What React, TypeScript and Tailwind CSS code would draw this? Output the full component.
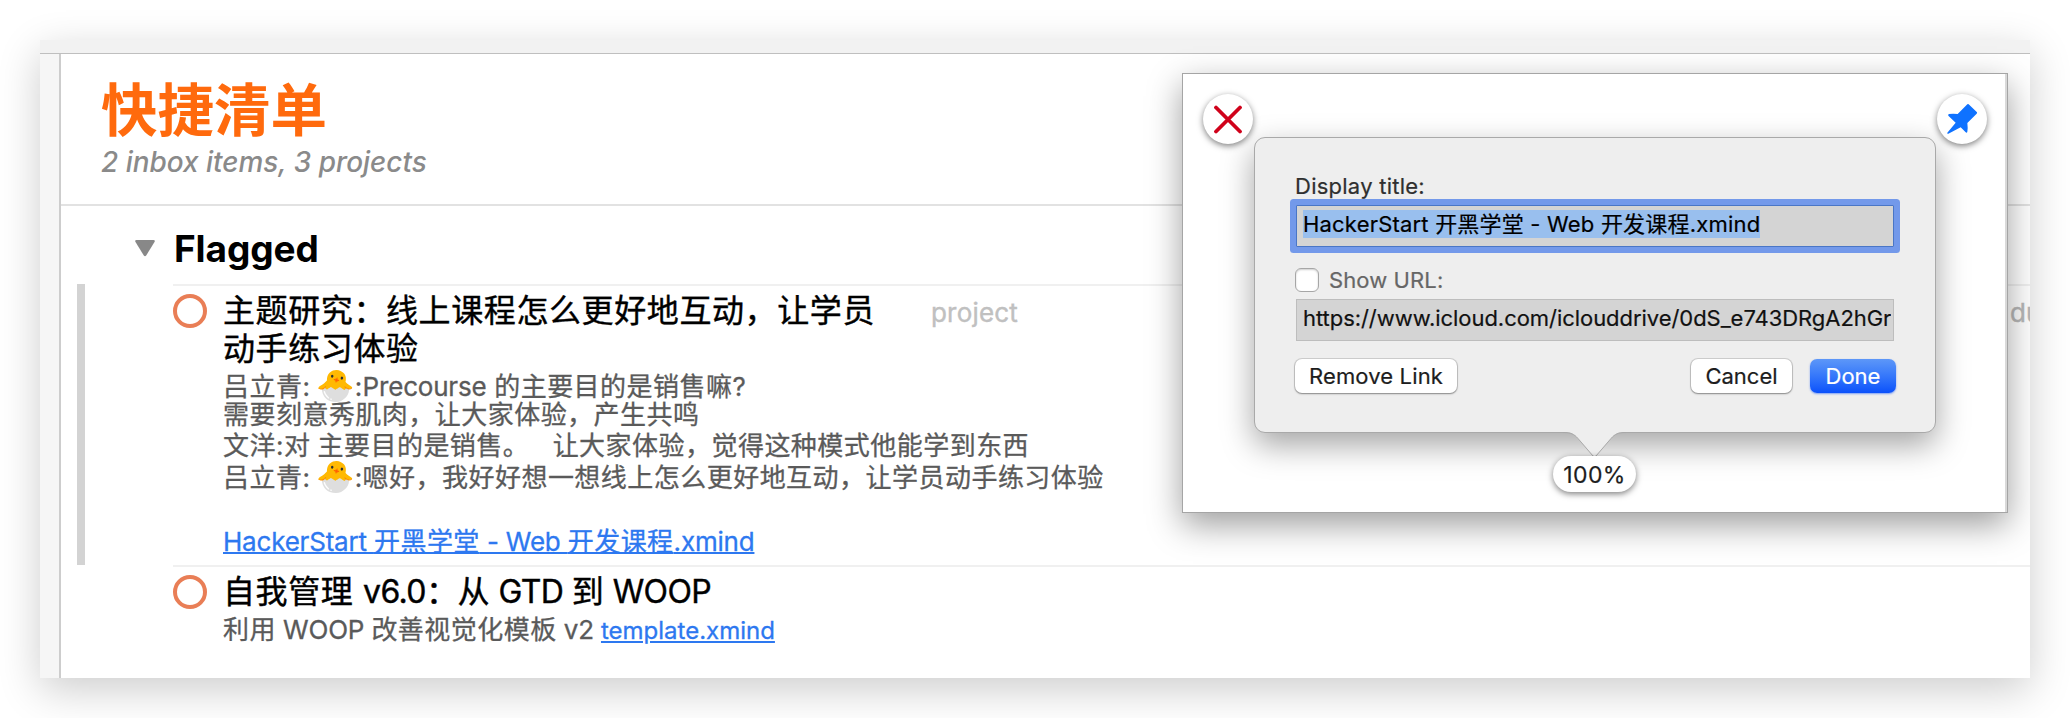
import type { ReactNode } from 'react';

function Latin({ children }: { children: ReactNode }) {
  return <span className="tracking-[-0.2px]">{children}</span>;
}

function TitleLatin({ children }: { children: ReactNode }) {
  return <span className="tracking-[-0.6px]">{children}</span>;
}

function Chick() {
  return <span className="-mr-px -ml-[2px] text-[31px] leading-[20px] [-webkit-text-stroke:0]">🐣</span>;
}

function StatusCircle() {
  return <span className="mt-2 size-[34px] shrink-0 rounded-full border-4 border-[#e97e56] bg-white" />;
}

function Task({ title, aside, children }: { title: ReactNode; aside?: ReactNode; children: ReactNode }) {
  return (
    <div className="flex border-t-2 border-[#f0f0f0]">
      <StatusCircle />
      <div className="ml-4 min-w-0 flex-1 pt-[6px]">
        <div className="flex">
          <h3 className="w-[664px] shrink-0 text-[32px] leading-[38px] tracking-[0.6px] text-black [-webkit-text-stroke:0.4px]">
            {title}
          </h3>
          {aside}
        </div>
        <div className="text-[26px] leading-[28px] tracking-[0.47px] whitespace-pre text-[#5a5a5a] [-webkit-text-stroke:0.3px]">
          {children}
        </div>
      </div>
    </div>
  );
}

function RoundButton({ className, children }: { className: string; children: ReactNode }) {
  return (
    <button
      className={`absolute top-5 flex size-[50px] items-center justify-center rounded-full bg-white shadow-[0_2px_6px_rgba(0,0,0,0.5)] ${className}`}
    >
      {children}
    </button>
  );
}

function LinkPopover() {
  return (
    <div className="absolute top-[63px] left-[71px] flex h-[296px] w-[682px] flex-col rounded-[11px] border border-[#a9a9a9] bg-[#eeeeee] pt-[34px] pr-[41px] pl-[41px] text-[22px] text-[#1d1d1d] shadow-[0_12px_32px_rgba(0,0,0,0.36)] [-webkit-text-stroke:0.2px]">
      <label className="-ml-px leading-[28px] tracking-[0.25px] text-[#2f2f2f]">Display title:</label>
      <div className="mt-[5px] h-[42px] rounded-[1px] border border-[#4a76c6] bg-[#d4d4d4] pt-1 pl-[6px] shadow-[0_0_0_6px_#7399ea]">
        <span className="inline-block bg-[#99bfee] align-top leading-[28px] tracking-[0.2px] whitespace-pre text-black">
          HackerStart 开黑学堂 - Web 开发课程.xmind
        </span>
      </div>
      <div className="mt-[21px] -ml-px flex h-6 items-center">
        <span className="size-6 rounded-[6px] border border-[#a6a6a6] bg-white shadow-[inset_0_1px_2px_rgba(0,0,0,0.2)]" />
        <span className="ml-[10px] leading-[22px] tracking-[0.1px] text-[#666666]">Show URL:</span>
      </div>
      <div className="mt-[7px] h-[42px] border border-[#bdbdbd] bg-[#d4d4d4] pt-1 pr-[2px] pl-[6px]">
        <div className="overflow-hidden leading-[28px] tracking-[-0.05px] whitespace-nowrap text-[#111111]">
          https://www.icloud.com/iclouddrive/0dS_e743DRgA2hGr
        </div>
      </div>
      <div className="mt-[18px] -mr-[2px] -ml-[1px] flex h-[34px] gap-[18px] leading-[34px]">
        <button className="mr-auto w-[162px] rounded-[7px] bg-white tracking-[0.15px] shadow-[0_0_0_1px_rgba(0,0,0,0.13),0_1px_2px_rgba(0,0,0,0.35)]">
          Remove Link
        </button>
        <button className="w-[101px] rounded-[7px] bg-white shadow-[0_0_0_1px_rgba(0,0,0,0.13),0_1px_2px_rgba(0,0,0,0.35)]">
          Cancel
        </button>
        <button className="w-[86px] rounded-[7px] bg-linear-to-b from-[#5d97f8] to-[#0a50fb] text-white shadow-[0_1px_2px_rgba(10,80,251,0.5)]">
          Done
        </button>
      </div>
      <svg className="absolute top-[294px] left-[308px]" width="63" height="26" viewBox="0 0 63 26">
        <path d="M0 0C8 0 11 2 15 6.5L30 24Q31.5 25.5 33 24L48 6.5C52 2 55 0 63 0Z" fill="#eeeeee" />
        <path d="M0 0.5C8 0.5 11 2 15 6.5L30 24Q31.5 25.5 33 24L48 6.5C52 2 55 0.5 63 0.5" fill="none" stroke="#a9a9a9" />
      </svg>
    </div>
  );
}

function PreviewPanel() {
  return (
    <div className="absolute top-[33px] left-[1142px] h-[440px] w-[826px] border border-[#a5a5a5] bg-white shadow-[0_12px_32px_rgba(0,0,0,0.38)]">
      <div className="ml-auto h-full w-[2px] bg-[#d9d9d9]" />
      <LinkPopover />
      <RoundButton className="left-5">
        <svg width="30" height="30" viewBox="0 0 30 30" fill="none" stroke="#d0021b" strokeWidth="3.8" strokeLinecap="round">
          <path d="M3 3.5L27 27.5M27 3.5L3 27.5" />
        </svg>
      </RoundButton>
      <RoundButton className="left-[754px]">
        <svg width="50" height="50" viewBox="0 0 150 150" fill="#0f72ff">
          <path d="M91 31Q93 29 95 31L120 55Q121 57 119 59L91 87Q93 102 91 113Q90 118 86 115L71 100L34 119L31 119L31 116L56 86L34 65Q32 62 36 60Q48 58 62 60Z" />
        </svg>
      </RoundButton>
      <div className="absolute top-[382px] left-[370px] flex h-9 w-[83px] items-center justify-center rounded-full bg-white pt-[3px] text-[23px] tracking-[0.4px] text-[#1d1d1d] shadow-[0_2px_6px_rgba(0,0,0,0.5)] [-webkit-text-stroke:0.2px]">
        100%
      </div>
    </div>
  );
}

export default function App() {
  return (
    <div
      lang="zh-CN"
      className="h-[718px] w-[2070px] overflow-hidden bg-white p-10 font-['Inter','Noto_Sans_CJK_SC',sans-serif]"
    >
      <div className="relative flex h-[638px] flex-col bg-white shadow-[0_12px_40px_rgba(0,0,0,0.2)]">
        <div className="h-[14px] shrink-0 border-b border-[#bfbfbf] bg-[#f2f2f2]" />
        <div className="flex min-h-0 flex-1">
          <div className="w-[21px] shrink-0 border-r-2 border-[#cdcdcd] bg-[#f6f6f6]" />
          <main className="min-w-0 flex-1">
            <header className="h-[152px] border-b-2 border-[#e2e2e2] pt-[27px] pl-10">
              <h1 className="text-[56.5px] leading-[60px] font-bold text-[#ff6a0d]">快捷清单</h1>
              <p className="mt-1 text-[27.9px] leading-[34px] font-medium text-[#8a8a8a] italic">2 inbox items, 3 projects</p>
            </header>
            <div className="flex h-[78px] items-start pt-[7px] pl-[74px]">
              <svg className="mt-[27px]" width="20" height="17" viewBox="0 0 20 17" fill="#888888">
                <path d="M1.5 0H18.5Q20.5 0 19.5 2L11.2 15.5Q10 17 8.8 15.5L0.5 2Q-0.5 0 1.5 0Z" />
              </svg>
              <h2 className="ml-[19px] text-[37px] leading-[71px] font-bold tracking-[-0.1px] text-black">Flagged</h2>
            </div>
            <div className="flex">
              <div className="ml-4 h-[281px] w-2 shrink-0 bg-[#d3d3d3]" />
              <div className="ml-[88px] min-w-0 flex-1">
                <div className="h-[281px]">
                  <Task
                    title="主题研究：线上课程怎么更好地互动，让学员动手练习体验"
                    aside={
                      <>
                        <span className="mt-[2px] ml-11 flex-1 text-[26px] leading-[38px] tracking-[0.2px] text-[#c0c0c0] [-webkit-text-stroke:0.4px]">
                          project
                        </span>
                        <span className="mt-[2px] w-5 overflow-hidden text-[26px] leading-[38px] text-[#b8b8b8] [-webkit-text-stroke:0.4px]">
                          du
                        </span>
                      </>
                    }
                  >
                    <p className="mt-[5px]">
                      吕立青: <Chick />:<Latin>Precourse</Latin> 的主要目的是销售嘛?
                    </p>
                    <p>需要刻意秀肌肉，让大家体验，产生共鸣</p>
                    <p className="mt-[3px]">
                      文洋:对<Latin> </Latin>主要目的是销售。{'\u00a0\u00a0\u00a0'}让大家体验，觉得这种模式他能学到东西
                    </p>
                    <p className="mt-1">
                      吕立青: <Chick />:嗯好，我好好想一想线上怎么更好地互动，让学员动手练习体验
                    </p>
                    <p className="mt-9">
                      <a className="text-[#2d78f0] underline decoration-2 underline-offset-1 [text-decoration-skip-ink:none]">
                        <Latin>HackerStart </Latin>开黑学堂<Latin> - Web </Latin>开发课程<Latin>.xmind</Latin>
                      </a>
                    </p>
                  </Task>
                </div>
                <Task
                  title={
                    <>
                      自我管理 <TitleLatin>v6.0：</TitleLatin>从<TitleLatin> GTD </TitleLatin>到<TitleLatin> WOOP</TitleLatin>
                    </>
                  }
                >
                  <p className="mt-[5px]">
                    利用<Latin> WOOP </Latin>改善视觉化模板<Latin> v2 </Latin>
                    <a className="text-[24px] tracking-normal text-[#2d78f0] underline decoration-2 underline-offset-2">template.xmind</a>
                  </p>
                </Task>
              </div>
            </div>
          </main>
        </div>
        <div className="pointer-events-none absolute inset-0 overflow-hidden">
          <div className="pointer-events-auto">
            <PreviewPanel />
          </div>
        </div>
      </div>
    </div>
  );
}
